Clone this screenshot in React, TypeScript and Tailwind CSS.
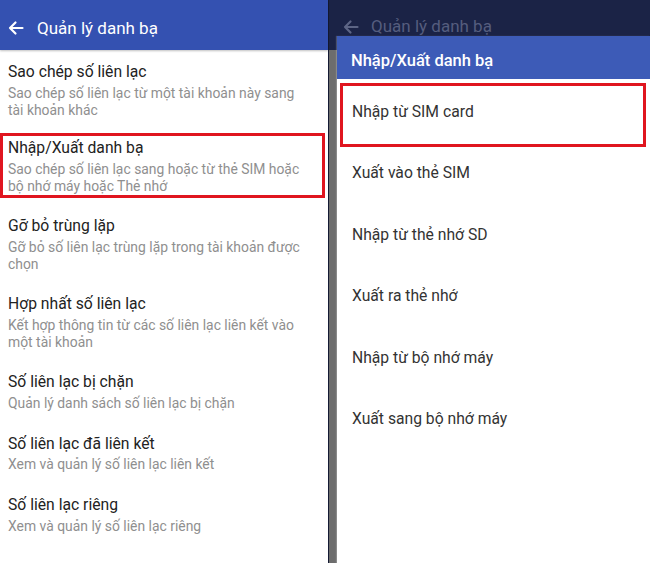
import React from "react";

const leftItems: { title: string; sub: string[] }[] = [
  { title: "Sao chép số liên lạc", sub: ["Sao chép số liên lạc từ một tài khoản này sang", "tài khoản khác"] },
  { title: "Nhập/Xuất danh bạ", sub: ["Sao chép số liên lạc sang hoặc từ thẻ SIM hoặc", "bộ nhớ máy hoặc Thẻ nhớ"] },
  { title: "Gỡ bỏ trùng lặp", sub: ["Gỡ bỏ số liên lạc trùng lặp trong tài khoản được", "chọn"] },
  { title: "Hợp nhất số liên lạc", sub: ["Kết hợp thông tin từ các số liên lạc liên kết vào", "một tài khoản"] },
  { title: "Số liên lạc bị chặn", sub: ["Quản lý danh sách số liên lạc bị chặn"] },
  { title: "Số liên lạc đã liên kết", sub: ["Xem và quản lý số liên lạc liên kết"] },
  { title: "Số liên lạc riêng", sub: ["Xem và quản lý số liên lạc riêng"] },
];

const rightItems = [
  "Nhập từ SIM card",
  "Xuất vào thẻ SIM",
  "Nhập từ thẻ nhớ SD",
  "Xuất ra thẻ nhớ",
  "Nhập từ bộ nhớ máy",
  "Xuất sang bộ nhớ máy",
];

function Arrow({ color }: { color: string }) {
  return (
    <svg width="16" height="16" viewBox="0 0 16 16" fill="none" stroke={color} strokeWidth="2.2" strokeLinecap="round" strokeLinejoin="round">
      <path d="M14.5 8H2M7.5 2.5L2 8l5.5 5.5" />
    </svg>
  );
}

export default function App() {
  return (
    <div className="flex w-[650px] h-[563px] overflow-hidden bg-white" style={{ fontFamily: "Roboto, 'Noto Sans', sans-serif" }}>
      {/* Left screen */}
      <div className="w-[328px] flex flex-col bg-white">
        <div className="h-[50px] bg-[#3451b1] flex items-center pl-[8px] pt-[6px] gap-[13px] shadow-[0_1px_2px_rgba(0,0,0,0.25)] relative z-10">
          <Arrow color="#ffffff" />
          <span className="text-white text-[17px] leading-none">Quản lý danh bạ</span>
        </div>
        <div className="flex flex-col pt-[12px]">
          {leftItems.map((it, i) => (
            <div
              key={i}
              className={
                i === 1
                  ? "mr-[3px] h-[65px] border-[3px] border-[#e0151f] pl-[5px] pt-[2px] mb-[18px]"
                  : i === 0
                  ? "h-[71px] pl-[8px]"
                  : it.sub.length === 2
                  ? "h-[78px] pl-[8px]"
                  : "h-[61.5px] pl-[8px]"
              }
            >
              <div className="text-[15.7px] leading-[20px] text-[#222222]">{it.title}</div>
              <div className="mt-[2.5px]">
                {it.sub.map((s, j) => (
                  <div key={j} className="text-[13.9px] leading-[17px] text-[#8f8f8f]">
                    {s}
                  </div>
                ))}
              </div>
            </div>
          ))}
        </div>
      </div>

      {/* Right screen (dimmed behind dialog) */}
      <div className="flex-1 relative flex flex-col border-l border-[#141a33]">
        <div className="h-[50px] bg-[#1b2346] flex items-start pt-[19px] pl-[14px] gap-[12px]">
          <Arrow color="#5d6585" />
          <span className="text-[#555d7e] text-[17px] leading-none -mt-[1px]">Quản lý danh bạ</span>
        </div>
        <div className="flex-1 bg-[#6d6d6d]" />

        <div className="absolute left-[8px] top-[36px] right-0 bottom-0 flex flex-col bg-white shadow-[-1px_0_1px_rgba(255,255,255,0.2)]">
          <div className="h-[43px] bg-[#3d5bb7] flex items-center pl-[14px] pt-[7px]">
            <span className="text-white text-[16.5px] font-medium leading-none">Nhập/Xuất danh bạ</span>
          </div>
          <div className="flex flex-col pt-[4px]">
            {rightItems.map((t, i) => (
              <div
                key={i}
                className={
                  i === 0
                    ? "h-[64px] ml-[3px] mr-[4px] border-[3px] border-[#e0151f] flex items-start pt-[16px] pl-[9px] mb-[-2px]"
                    : "h-[61.6px] flex items-start pt-[18px] pl-[15px]"
                }
              >
                <span className="text-[15.7px] leading-[20px] text-[#333333]">{t}</span>
              </div>
            ))}
          </div>
        </div>
      </div>
    </div>
  );
}
